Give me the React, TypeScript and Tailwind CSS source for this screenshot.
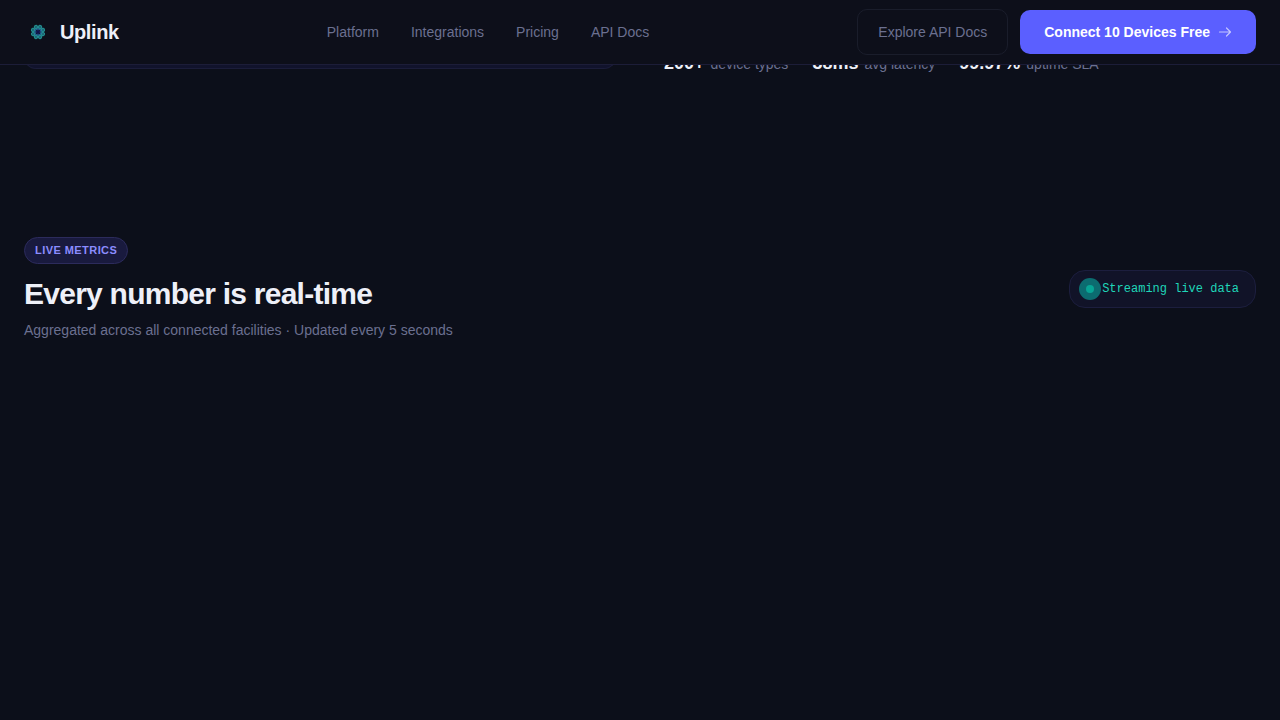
const navLinks = ['Platform', 'Integrations', 'Pricing', 'API Docs'];

const heroStats = [
  { value: '200+', label: 'device types' },
  { value: '38ms', label: 'avg latency' },
  { value: '99.97%', label: 'uptime SLA' },
];

const petals = [0, 45, 90, 135, 180, 225, 270, 315];

function Logo() {
  return (
    <svg viewBox="0 0 28 28" className="size-7" fill="none" aria-hidden="true">
      <circle cx="14" cy="14" r="4.4" stroke="#1d5580" strokeWidth="3.8" />
      {petals.map((angle) => (
        <g key={angle} transform={`rotate(${angle + 22.5} 14 14)`}>
          <circle cx="14" cy="8.6" r="1.6" fill="#1c6474" stroke="#23908f" strokeWidth="1" />
          <path d="M14 10.2V12.4" stroke="#2d68a8" strokeWidth="0.8" />
        </g>
      ))}
      <circle cx="14" cy="14" r="1.8" fill="#10104e" />
    </svg>
  );
}

function Header() {
  return (
    <header className="sticky top-0 z-10 border-b border-[#1c1d38] bg-[#0d0f1a]">
      <div className="flex h-16 items-center justify-between px-6">
        <a href="#top" className="flex items-center gap-2 text-xl font-bold tracking-[-0.02em] text-[#eef0f8]">
          <Logo />
          Uplink
        </a>
        <nav className="flex items-center gap-8 text-sm text-[#6b7090]">
          {navLinks.map((link) => (
            <a key={link} href="#top">
              {link}
            </a>
          ))}
        </nav>
        <div className="flex items-center gap-3 text-sm">
          <button type="button" className="rounded-[10px] border border-[#1a1d2b] px-5 py-3 text-[#6b7090]">
            Explore API Docs
          </button>
          <button
            type="button"
            className="flex h-11 items-center gap-2 rounded-[10px] bg-[#5b5fff] px-6 font-semibold text-white"
          >
            Connect 10 Devices Free
            <svg viewBox="0 0 14 14" className="size-3.5" fill="none" stroke="#c3c5ff" strokeWidth="1.2" strokeLinecap="round" strokeLinejoin="round" aria-hidden="true">
              <path d="M1.5 7h11M8.5 3l4 4-4 4" />
            </svg>
          </button>
        </div>
      </div>
    </header>
  );
}

function Hero() {
  return (
    <section className="-mt-9 grid grid-cols-2 items-end gap-12 px-6">
      <div className="mb-2 h-10 rounded-b-xl border border-t-0 border-[#1b1d3a] bg-[#11132c]" />
      <dl className="flex gap-6">
        {heroStats.map((stat) => (
          <div key={stat.label} className="flex items-baseline gap-1.5">
            <dt className="order-2 text-sm text-[#6b7090]">{stat.label}</dt>
            <dd className="text-lg font-bold text-[#eef0f8]">{stat.value}</dd>
          </div>
        ))}
      </dl>
    </section>
  );
}

function LiveMetrics() {
  return (
    <section className="flex items-center justify-between px-6 pt-40">
      <div>
        <span className="inline-block rounded-full border border-[#2c2b5c] bg-[#191a3e] px-2.5 py-1 text-[11px] leading-[17px] font-semibold tracking-[0.04em] text-[#8b8cff]">
          LIVE METRICS
        </span>
        <h2 className="mt-3 text-3xl leading-9 font-bold tracking-tight text-[#eef0f8]">Every number is real-time</h2>
        <p className="mt-2 text-sm text-[#6b7090]">
          Aggregated across all connected facilities · Updated every 5 seconds
        </p>
      </div>
      <div className="flex items-center gap-2 rounded-[16px] border border-[#1c1e3e] bg-[#111328] px-4 py-2.5">
        <span className="relative size-2 rounded-full bg-[#00d0a4]">
          <span className="absolute -inset-[7px] rounded-full bg-[#0a938e]/70" />
        </span>
        <span className="font-['Liberation_Mono',monospace] text-xs text-[#1fd6b8]">Streaming live data</span>
      </div>
    </section>
  );
}

export default function App() {
  return (
    <div id="top" className="min-h-screen bg-[#0c0f1a] font-['Liberation_Sans',Arial,sans-serif]">
      <Header />
      <main>
        <Hero />
        <LiveMetrics />
      </main>
    </div>
  );
}
